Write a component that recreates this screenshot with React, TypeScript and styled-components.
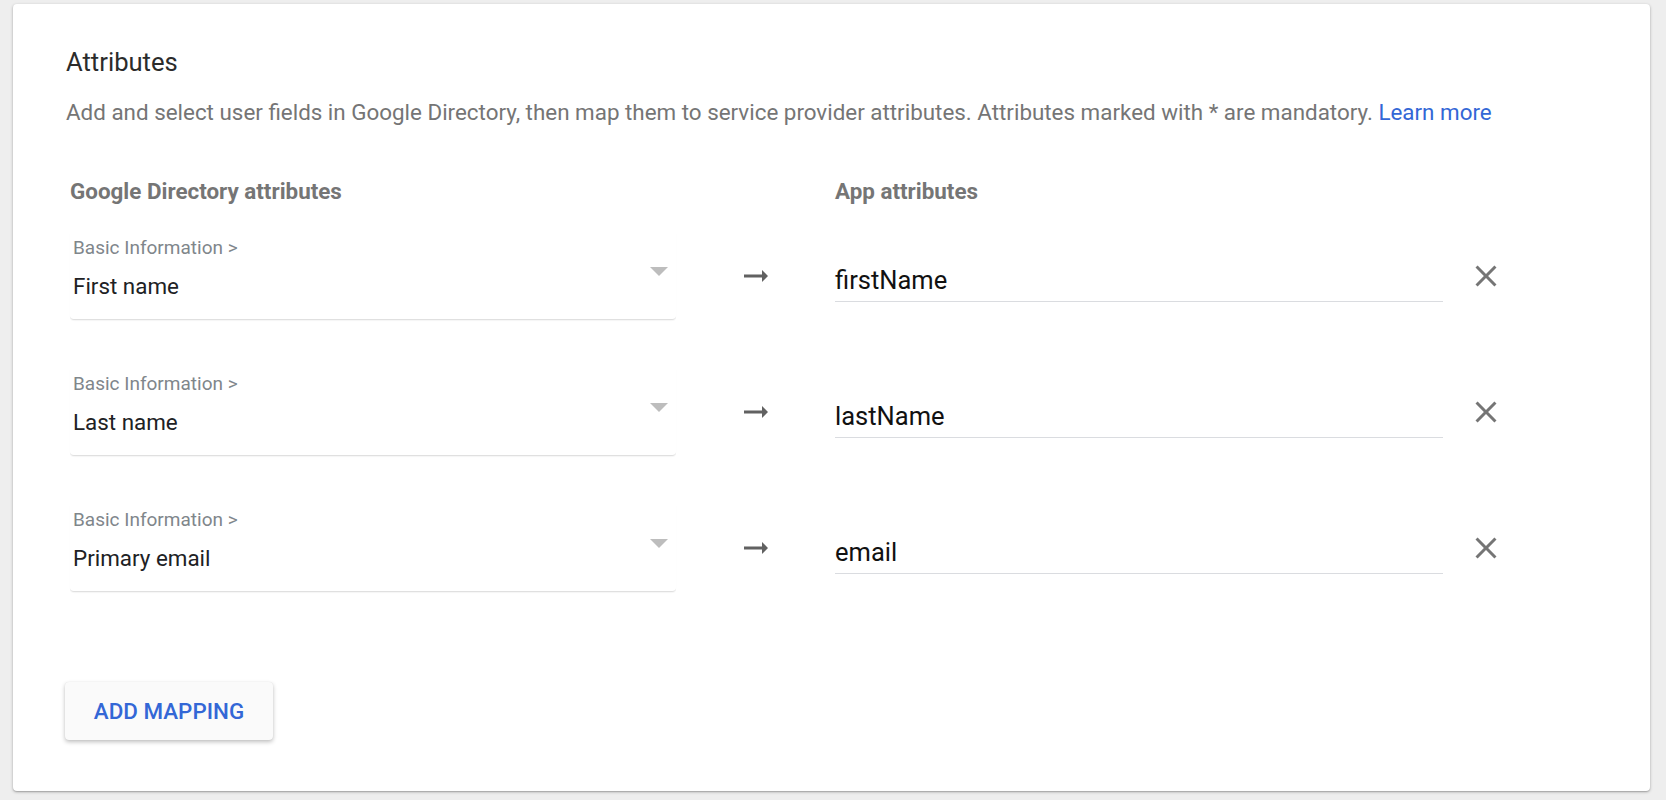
import styled, { createGlobalStyle } from "styled-components";

const GlobalStyle = createGlobalStyle`
  html, body {
    margin: 0;
    padding: 0;
    background: #eeeeee;
  }
  body {
    font-family: Roboto, "Noto Sans", Arial, sans-serif;
    -webkit-font-smoothing: antialiased;
  }
`;

type Mapping = {
  group: string;
  field: string;
  appAttr: string;
};

const mappings: Mapping[] = [
  { group: "Basic Information >", field: "First name", appAttr: "firstName" },
  { group: "Basic Information >", field: "Last name", appAttr: "lastName" },
  { group: "Basic Information >", field: "Primary email", appAttr: "email" },
];

// select column | arrow | app attribute input | remove button
const columns = "606px 159px 608px 86px";

const Page = styled.div`
  padding: 4px 16px 9px 13px;
`;

const Card = styled.div`
  background: #ffffff;
  border-radius: 4px;
  box-shadow: 0 1px 3px rgba(0, 0, 0, 0.3), 0 1px 1px rgba(0, 0, 0, 0.1);
  padding: 42px 40px 51px 53px;
  height: 787px;
  box-sizing: border-box;
`;

const Title = styled.h2`
  margin: 0;
  font-size: 25.6px;
  line-height: 32px;
  font-weight: 400;
  color: #2b2b2b;
`;

const Description = styled.p`
  margin: 20px 0 0;
  font-size: 22.4px;
  line-height: 28px;
  color: #757575;
  white-space: nowrap;
`;

const Link = styled.a`
  color: #3367d6;
  cursor: pointer;
`;

const HeaderRow = styled.div`
  display: grid;
  grid-template-columns: ${columns};
  margin: 51px 0 0 4px;
`;

const ColumnHeader = styled.div`
  font-size: 22.4px;
  line-height: 28px;
  font-weight: 700;
  color: #757575;
`;

const Rows = styled.div`
  display: flex;
  flex-direction: column;
  gap: 48px;
  margin: 27px 0 0 4px;
`;

const Row = styled.div`
  display: grid;
  grid-template-columns: ${columns};
  height: 88px;
  align-items: center;
`;

const Select = styled.div`
  position: relative;
  align-self: start;
  padding: 6px 3px 21px;
  border-bottom: 1px solid #e0e0e0;
  border-radius: 0 0 4px 4px;
  box-shadow: 0 1px 1px rgba(0, 0, 0, 0.04);
  cursor: pointer;
`;

const SelectLabel = styled.div`
  font-size: 19px;
  line-height: 20px;
  color: #80868b;
`;

const SelectValue = styled.div`
  margin-top: 16px;
  font-size: 22.4px;
  line-height: 24px;
  color: #202124;
`;

const Caret = styled.span`
  position: absolute;
  right: 8px;
  top: 35px;
  width: 0;
  height: 0;
  border-left: 9px solid transparent;
  border-right: 9px solid transparent;
  border-top: 9px solid #bdbdbd;
`;

const IconCell = styled.div<{ clickable?: boolean }>`
  display: flex;
  justify-content: center;
  align-items: center;
  cursor: ${({ clickable }) => (clickable ? "pointer" : "default")};
`;

const Input = styled.div`
  align-self: start;
  margin-top: 34px;
  padding-bottom: 7px;
  font-size: 25.5px;
  line-height: 28px;
  color: #111111;
  border-bottom: 1px solid #dadce0;
`;

const Button = styled.button`
  display: block;
  margin: 90px 0 0 -1px;
  width: 208px;
  height: 58px;
  border: 0;
  border-radius: 4px;
  background: #fafafa;
  box-shadow: 0 2px 4px rgba(0, 0, 0, 0.25), 0 0 1px rgba(0, 0, 0, 0.1);
  font-family: Roboto, Arial, sans-serif;
  font-size: 22.4px;
  font-weight: 500;
  color: #3367d6;
  cursor: pointer;
`;

const ArrowIcon = () => (
  <svg width="36" height="36" viewBox="0 0 24 24" fill="#616161">
    <path d="M16.01 11H4v2h12.01v3L20 12l-3.99-4z" />
  </svg>
);

const CloseIcon = () => (
  <svg width="36" height="36" viewBox="0 0 24 24" fill="#757575">
    <path d="M19 6.41 17.59 5 12 10.59 6.41 5 5 6.41 10.59 12 5 17.59 6.41 19 12 13.41 17.59 19 19 17.59 13.41 12z" />
  </svg>
);

const MappingRow = ({ mapping }: { mapping: Mapping }) => (
  <Row>
    <Select>
      <SelectLabel>{mapping.group}</SelectLabel>
      <SelectValue>{mapping.field}</SelectValue>
      <Caret />
    </Select>
    <IconCell>
      <ArrowIcon />
    </IconCell>
    <Input>{mapping.appAttr}</Input>
    <IconCell clickable>
      <CloseIcon />
    </IconCell>
  </Row>
);

const App = () => {
  return (
    <Page>
      <GlobalStyle />
      <Card>
        <Title>Attributes</Title>
        <Description>
          Add and select user fields in Google Directory, then map them to
          service provider attributes. Attributes marked with * are mandatory.{" "}
          <Link>Learn more</Link>
        </Description>

        <HeaderRow>
          <ColumnHeader>Google Directory attributes</ColumnHeader>
          <span />
          <ColumnHeader>App attributes</ColumnHeader>
        </HeaderRow>

        <Rows>
          {mappings.map((m) => (
            <MappingRow key={m.appAttr} mapping={m} />
          ))}
        </Rows>

        <Button>ADD MAPPING</Button>
      </Card>
    </Page>
  );
};

export default App;
